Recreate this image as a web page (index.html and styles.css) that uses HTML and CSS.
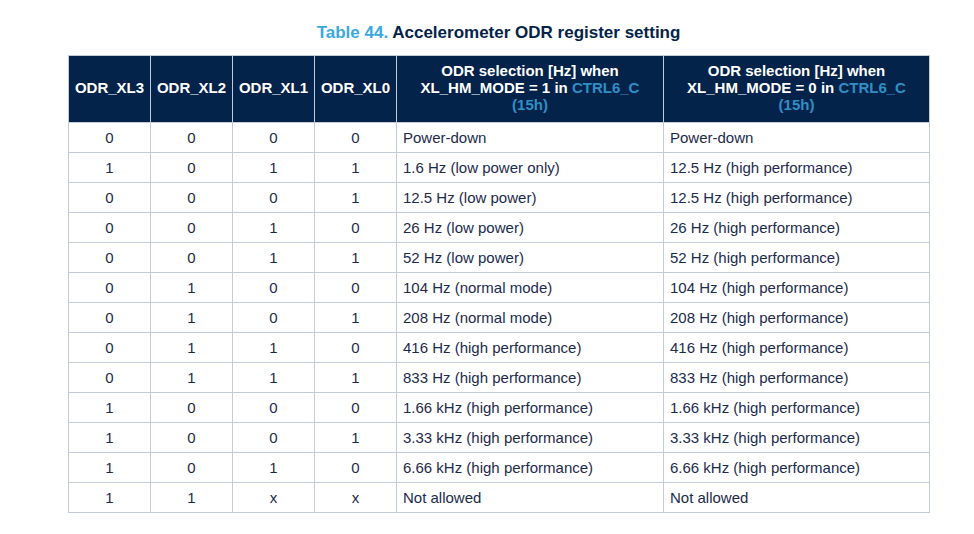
FILE: index.html
```html
<!DOCTYPE html>
<html>
<head>
<meta charset="utf-8">
<link rel="stylesheet" href="styles.css">
</head>
<body>
<div class="page">
  <div class="title"><span class="num">Table 44.</span> Accelerometer ODR register setting</div>
  <table class="odr">
    <colgroup>
      <col class="c-bit"><col class="c-bit"><col class="c-bit"><col class="c-bit"><col class="c-desc"><col class="c-desc2">
    </colgroup>
    <thead>
      <tr>
        <th>ODR_XL3</th><th>ODR_XL2</th><th>ODR_XL1</th><th>ODR_XL0</th>
        <th>ODR selection [Hz] when<br>XL_HM_MODE = 1 in <span class="link">CTRL6_C</span><br><span class="link">(15h)</span></th>
        <th>ODR selection [Hz] when<br>XL_HM_MODE = 0 in <span class="link">CTRL6_C</span><br><span class="link">(15h)</span></th>
      </tr>
    </thead>
    <tbody>
      <tr><td>0</td><td>0</td><td>0</td><td>0</td><td class="t">Power-down</td><td class="t">Power-down</td></tr>
      <tr><td>1</td><td>0</td><td>1</td><td>1</td><td class="t">1.6 Hz (low power only)</td><td class="t">12.5 Hz (high performance)</td></tr>
      <tr><td>0</td><td>0</td><td>0</td><td>1</td><td class="t">12.5 Hz (low power)</td><td class="t">12.5 Hz (high performance)</td></tr>
      <tr><td>0</td><td>0</td><td>1</td><td>0</td><td class="t">26 Hz (low power)</td><td class="t">26 Hz (high performance)</td></tr>
      <tr><td>0</td><td>0</td><td>1</td><td>1</td><td class="t">52 Hz (low power)</td><td class="t">52 Hz (high performance)</td></tr>
      <tr><td>0</td><td>1</td><td>0</td><td>0</td><td class="t">104 Hz (normal mode)</td><td class="t">104 Hz (high performance)</td></tr>
      <tr><td>0</td><td>1</td><td>0</td><td>1</td><td class="t">208 Hz (normal mode)</td><td class="t">208 Hz (high performance)</td></tr>
      <tr><td>0</td><td>1</td><td>1</td><td>0</td><td class="t">416 Hz (high performance)</td><td class="t">416 Hz (high performance)</td></tr>
      <tr><td>0</td><td>1</td><td>1</td><td>1</td><td class="t">833 Hz (high performance)</td><td class="t">833 Hz (high performance)</td></tr>
      <tr><td>1</td><td>0</td><td>0</td><td>0</td><td class="t">1.66 kHz (high performance)</td><td class="t">1.66 kHz (high performance)</td></tr>
      <tr><td>1</td><td>0</td><td>0</td><td>1</td><td class="t">3.33 kHz (high performance)</td><td class="t">3.33 kHz (high performance)</td></tr>
      <tr><td>1</td><td>0</td><td>1</td><td>0</td><td class="t">6.66 kHz (high performance)</td><td class="t">6.66 kHz (high performance)</td></tr>
      <tr><td>1</td><td>1</td><td>x</td><td>x</td><td class="t">Not allowed</td><td class="t">Not allowed</td></tr>
    </tbody>
  </table>
</div>
</body>
</html>
```
FILE: styles.css
```css
html, body {
  margin: 0;
  padding: 0;
  background: #ffffff;
}
.page {
  padding: 23px 0 0 68px;
  font-family: "Liberation Sans", Arial, sans-serif;
  color: #1c2b4c;
}
.title {
  width: 861px;
  text-align: center;
  font-size: 17px;
  font-weight: bold;
  line-height: 20px;
  color: #03234b;
  margin-bottom: 12px;
}
.title .num {
  color: #3ba9e0;
}
.odr {
  border-collapse: collapse;
  width: 861px;
  table-layout: fixed;
  font-size: 15px;
}
.c-bit { width: 82px; }
.c-desc { width: 267px; }
.c-desc2 { width: 266px; }
.odr th {
  background: #03234b;
  color: #ffffff;
  font-weight: bold;
  line-height: 17px;
  height: 51px;
  padding: 6px 2px 9px 2px;
  border: 1px solid #c3ccd6;
  text-align: center;
  vertical-align: middle;
  white-space: nowrap;
}
.odr th .link {
  color: #2f8fc5;
}
.odr td {
  border: 1px solid #c3ccd6;
  height: 17px;
  line-height: 17px;
  padding: 6px 6px 6px 6px;
  text-align: center;
  vertical-align: middle;
  white-space: nowrap;
}
.odr td.t {
  text-align: left;
}
```
